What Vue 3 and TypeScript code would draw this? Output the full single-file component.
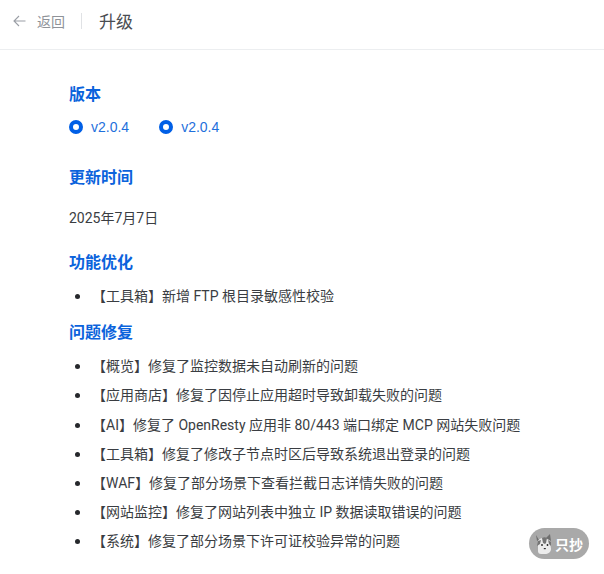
<script setup lang="ts">
const fixes: string[] = [
  '【概览】修复了监控数据未自动刷新的问题',
  '【应用商店】修复了因停止应用超时导致卸载失败的问题',
  '【AI】修复了 OpenResty 应用非 80/443 端口绑定 MCP 网站失败问题',
  '【工具箱】修复了修改子节点时区后导致系统退出登录的问题',
  '【WAF】修复了部分场景下查看拦截日志详情失败的问题',
  '【网站监控】修复了网站列表中独立 IP 数据读取错误的问题',
  '【系统】修复了部分场景下许可证校验异常的问题',
]
</script>

<template>
  <div class="page">
    <header class="bar">
      <svg class="arrow" width="13" height="14" viewBox="0 0 13 14" fill="none" stroke="#9a9ea5" stroke-width="1.1">
        <path d="M12.5 7H1M6 2 1 7l5 5" />
      </svg>
      <span class="back">返回</span>
      <span class="sep"></span>
      <span class="title">升级</span>
    </header>
    <main class="content">
      <h2 class="h first">版本</h2>
      <div class="radios">
        <label class="radio"><span class="dot"></span>v2.0.4</label>
        <label class="radio"><span class="dot"></span>v2.0.4</label>
      </div>
      <h2 class="h time">更新时间</h2>
      <p class="date">2025年7月7日</p>
      <h2 class="h opt">功能优化</h2>
      <ul class="list one">
        <li>【工具箱】新增 FTP 根目录敏感性校验</li>
      </ul>
      <h2 class="h fix">问题修复</h2>
      <ul class="list">
        <li v-for="f in fixes" :key="f">{{ f }}</li>
      </ul>
    </main>
    <div class="badge">
      <svg width="21" height="24" viewBox="0 0 21 24">
        <path d="M2 3l1 6 2-1zM16 2l-4 4 5 3z" fill="#6f6f6f" />
        <path d="M4 9c1-2 3-3 5-3s5 1 7 3l1 8c0 3-3 5-6 5H7c-2 0-3-1-3-3z" fill="#ececec" />
        <path d="M8 6l1 5 2 1 1-1 1-5c-2-1-3-1-5 0zM14 8l3 2v4l-2-2zM4 9l3-1-1 4-3 2z" fill="#757575" />
        <circle cx="8" cy="13" r=".9" fill="#222" />
        <circle cx="13.5" cy="13" r=".9" fill="#222" />
        <path d="M9.8 16h2v1.2h-2z" fill="#333" />
      </svg>
      <span>只抄</span>
    </div>
  </div>
</template>

<style>
html, body { margin: 0; background: #fff; }
</style>

<style scoped>
.page {
  position: relative;
  width: 604px;
  height: 574px;
  overflow: hidden;
  background: #fff;
  font-family: Roboto, "Noto Sans CJK SC", sans-serif;
  font-size: 14px;
  color: #3a3d42;
}
.bar {
  display: flex;
  align-items: center;
  height: 50px;
  padding: 0 0 8px 13px;
  box-sizing: border-box;
  border-bottom: 1px solid #eceef0;
}
.arrow { margin-right: 11px; }
.back { color: #8f9399; font-size: 14px; }
.sep { width: 1px; height: 16px; background: #e0e2e5; margin: 0 17px 0 16px; }
.title { font-size: 17px; color: #4a4d52; }
.content { padding: 0 0 0 69px; }
.h {
  margin: 0;
  font-size: 16px;
  font-weight: 700;
  line-height: 24px;
  color: #0b63dc;
}
.first { margin-top: 33px; }
.radios { display: flex; gap: 30px; margin-top: 9px; height: 22px; align-items: center; }
.radio {
  display: flex;
  align-items: center;
  gap: 8px;
  color: #1f70dc;
  font-family: "Liberation Sans", sans-serif;
  font-size: 14px;
}
.dot {
  width: 14px;
  height: 14px;
  box-sizing: border-box;
  border: 4.5px solid #005fe6;
  border-radius: 50%;
  background: #fff;
}
.time { margin-top: 28px; }
.date { margin: 17px 0 0; line-height: 22px; }
.opt { margin-top: 22px; }
.list { margin: 0; padding: 0 0 0 23px; list-style: none; }
.list li { position: relative; line-height: 29.2px; }
.list li::before {
  content: "";
  position: absolute;
  left: -17px;
  top: 12px;
  width: 5px;
  height: 5px;
  border-radius: 50%;
  background: #26282c;
}
.one { margin-top: 7px; }
.fix { margin-top: 10px; }
.fix + .list { margin-top: 7px; }
.badge {
  position: absolute;
  left: 529px;
  top: 528px;
  width: 60px;
  height: 31px;
  border-radius: 16px;
  background: #a9a9a9;
  display: flex;
  align-items: center;
  padding-left: 5px;
  box-sizing: border-box;
  color: #fff;
  font-size: 14px;
  font-weight: 700;
}
</style>
